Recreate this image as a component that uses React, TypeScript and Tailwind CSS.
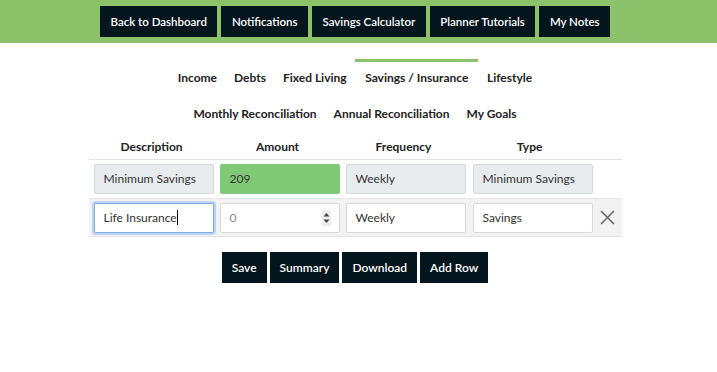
import React from "react";

const topButtons = ["Back to Dashboard", "Notifications", "Savings Calculator", "Planner Tutorials", "My Notes"];
const tabs1 = ["Income", "Debts", "Fixed Living", "Savings / Insurance", "Lifestyle"];
const tabs2 = ["Monthly Reconciliation", "Annual Reconciliation", "My Goals"];

function Field({ children, className = "" }: { children?: React.ReactNode; className?: string }) {
  return (
    <div className={`h-[30px] w-[120px] border rounded-[2px] px-[9px] flex items-center text-[12px] text-[#333] ${className}`}>
      {children}
    </div>
  );
}

export default function App() {
  return (
    <div className="w-[717px] h-[372px] bg-white" style={{ fontFamily: "Lato, 'Open Sans', sans-serif" }}>
      <div className="h-[43px] bg-[#8bc26a] flex justify-center items-start pt-[6px] gap-[4px] pr-[7px]">
        {topButtons.map((b) => (
          <div key={b} className="h-[31px] px-[10.5px] bg-[#03151d] text-white text-[11.5px] font-semibold flex items-center">
            {b}
          </div>
        ))}
      </div>

      <div className="pr-[7px]">
        <div className="flex justify-center mt-[16px]">
          {tabs1.map((t) => (
            <div
              key={t}
              className={`px-[8.5px] h-[33px] flex items-center pt-[1px] text-[12px] font-bold text-[#222] border-t-[3px] ${
                t === "Savings / Insurance" ? "border-[#8bc26a] px-[10px]" : "border-transparent"
              }`}
            >
              {t}
            </div>
          ))}
        </div>
        <div className="flex justify-center mt-[3px]">
          {tabs2.map((t) => (
            <div key={t} className="px-[8.5px] h-[33px] flex items-center pt-[1px] text-[12px] font-bold text-[#222] border-t-[3px] border-transparent">
              {t}
            </div>
          ))}
        </div>

        <div className="flex justify-center mt-[9px]">
          <div className="w-[533px]">
            <div className="grid grid-cols-[126px_126px_126px_126px_29px] h-[23px] items-center border-b border-[#e3e3e3] text-[12px] font-bold text-[#222]">
              <div className="text-center pb-[2px]">Description</div>
              <div className="text-center pb-[2px]">Amount</div>
              <div className="text-center pb-[2px]">Frequency</div>
              <div className="text-center pb-[2px]">Type</div>
              <div />
            </div>
            <div className="grid grid-cols-[126px_126px_126px_126px_29px] h-[39px] items-center border-b border-[#e6e6e6] bg-white">
              <div className="pl-[5px]">
                <Field className="bg-[#e9ecef] border-[#d6d9dc]">Minimum Savings</Field>
              </div>
              <div className="pl-[5px]">
                <Field className="bg-[#80c977] border-[#80c977]">209</Field>
              </div>
              <div className="pl-[5px]">
                <Field className="bg-[#e9ecef] border-[#d6d9dc]">Weekly</Field>
              </div>
              <div className="pl-[6px]">
                <Field className="bg-[#e9ecef] border-[#d6d9dc]">Minimum Savings</Field>
              </div>
              <div />
            </div>
            <div className="grid grid-cols-[126px_126px_126px_126px_29px] h-[38px] items-center border-b border-[#e3e3e3] bg-[#f2f2f2]">
              <div className="pl-[5px]">
                <Field className="bg-white border-[#80a8e0] shadow-[0_0_0_2px_#bcd3f2]">
                  <span>Life Insurance</span>
                  <span className="inline-block w-[1px] h-[15px] bg-black" />
                </Field>
              </div>
              <div className="pl-[5px]">
                <Field className="bg-white border-[#d6d9dc] justify-between pr-[8px]">
                  <span className="text-[#888]">0</span>
                  <svg width="9" height="16" viewBox="0 0 9 16">
                    <rect x="0" y="0" width="9" height="16" fill="#eeeeee" />
                    <path d="M1.5 6.5 L4.5 3 L7.5 6.5 Z" fill="#444" />
                    <path d="M1.5 9.5 L4.5 13 L7.5 9.5 Z" fill="#444" />
                  </svg>
                </Field>
              </div>
              <div className="pl-[5px]">
                <Field className="bg-white border-[#d6d9dc]">Weekly</Field>
              </div>
              <div className="pl-[6px]">
                <Field className="bg-white border-[#d6d9dc]">Savings</Field>
              </div>
              <div className="flex justify-center">
                <svg width="15" height="15" viewBox="0 0 15 15">
                  <path d="M1 1 L14 14 M14 1 L1 14" stroke="#666" strokeWidth="1.5" />
                </svg>
              </div>
            </div>
          </div>
        </div>

        <div className="flex justify-center gap-[3px] mt-[15px]">
          {["Save", "Summary", "Download", "Add Row"].map((b) => (
            <div key={b} className="h-[31px] px-[10px] bg-[#03151d] text-white text-[12px] font-semibold flex items-center">
              {b}
            </div>
          ))}
        </div>
      </div>
    </div>
  );
}
